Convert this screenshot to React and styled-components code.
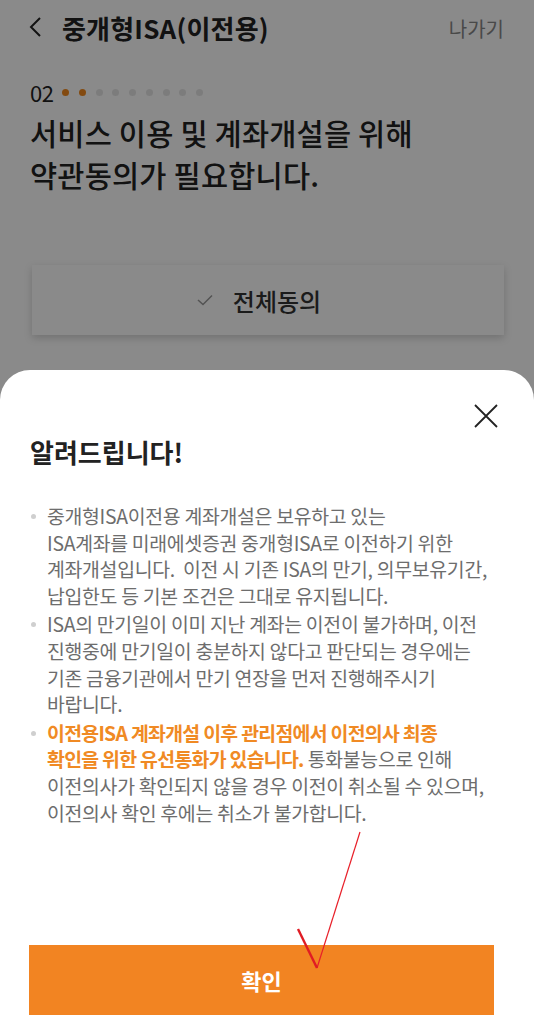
import React from "react";
import styled, { createGlobalStyle } from "styled-components";

const Global = createGlobalStyle`
  html, body { margin: 0; padding: 0; }
  body { font-family: "Noto Sans CJK KR", "Noto Sans", sans-serif; background: #fff; }
  * { box-sizing: border-box; }
`;

const Page = styled.div`
  position: relative;
  width: 534px;
  height: 1024px;
  overflow: hidden;
  background: #fff;
`;

const Header = styled.header`
  display: flex;
  align-items: center;
  height: 54px;
  padding: 0 30px 0 28px;
`;

const BackBtn = styled.span`
  display: flex;
  width: 22px;
  margin-right: 12px;
`;

const Title = styled.h1`
  flex: 1;
  margin: 0;
  font-size: 26px;
  font-weight: 700;
  color: #222;
  letter-spacing: 0.2px;
`;

const Exit = styled.span`
  font-size: 20px;
  color: #888;
  margin-top: 2px;
`;

const Content = styled.div`
  padding: 24px 30px 0;
`;

const Progress = styled.div`
  display: flex;
  align-items: center;
  height: 28px;
`;

const StepNo = styled.span`
  font-size: 22px;
  color: #222;
  margin-right: 9px;
  letter-spacing: -0.5px;
`;

const Dots = styled.div`
  display: flex;
  gap: 9.7px;
  align-items: center;
`;

const Dot = styled.span`
  width: 7px;
  height: 7px;
  border-radius: 50%;
  background: ${(p) => (p.$on ? "#f28a1e" : "#e6e6e6")};
`;

const Heading = styled.h2`
  margin: 5px 0 0;
  font-size: 29.5px;
  font-weight: 500;
  line-height: 42px;
  color: #222;
  letter-spacing: 0.2px;
`;

const AgreeBox = styled.div`
  margin: 70px 0 0 2px;
  height: 70px;
  padding-right: 18px;
  display: flex;
  align-items: center;
  justify-content: center;
  gap: 20px;
  background: #fff;
  box-shadow: 0 3px 8px rgba(0, 0, 0, 0.18);
  font-size: 24px;
  font-weight: 500;
  color: #333;
`;

const Dim = styled.div`
  position: absolute;
  inset: 0;
  background: rgba(0, 0, 0, 0.46);
`;

const Sheet = styled.section`
  position: absolute;
  left: 0;
  right: 0;
  top: 370px;
  bottom: 0;
  background: #fff;
  border-radius: 30px 30px 0 0;
  display: flex;
  flex-direction: column;
  padding: 34px 30px 9px 29px;
`;

const CloseRow = styled.div`
  display: flex;
  justify-content: flex-end;
  padding-right: 6px;
`;

const SheetTitle = styled.h3`
  margin: 5px 0 0 1px;
  font-size: 26px;
  font-weight: 700;
  color: #222;
  letter-spacing: 0;
`;

const List = styled.ul`
  list-style: none;
  margin: 33px 0 0;
  padding: 0;
  flex: 1;
`;

const Item = styled.li`
  position: relative;
  padding-left: 18px;
  font-size: 19.4px;
  line-height: 26.7px;
  color: #6d6d6d;
  letter-spacing: -0.3px;
  margin-bottom: 1.5px;
  white-space: nowrap;
  &::before {
    content: "";
    position: absolute;
    left: 2px;
    top: 11px;
    width: 5px;
    height: 5px;
    border-radius: 50%;
    background: #cfcfcf;
  }
`;

const Strong = styled.b`
  color: #f08a24;
  font-weight: 700;
  letter-spacing: -0.7px;
`;

const ConfirmBtn = styled.button`
  height: 70px;
  width: 465px;
  border: none;
  background: #f28422;
  color: #fff;
  font-family: inherit;
  font-size: 22px;
  font-weight: 700;
`;

const Annotation = styled.svg`
  position: absolute;
  left: 0;
  top: 0;
  pointer-events: none;
`;

export default function App() {
  return (
    <>
      <Global />
      <Page>
        <Header>
          <BackBtn>
            <svg width="14" height="22" viewBox="0 0 14 22">
              <path d="M12 2 L3 11 L12 20" fill="none" stroke="#222" strokeWidth="2" />
            </svg>
          </BackBtn>
          <Title>중개형ISA(이전용)</Title>
          <Exit>나가기</Exit>
        </Header>
        <Content>
          <Progress>
            <StepNo>02</StepNo>
            <Dots>
              {Array.from({ length: 9 }).map((_, i) => (
                <Dot key={i} $on={i < 2} />
              ))}
            </Dots>
          </Progress>
          <Heading>
            서비스 이용 및 계좌개설을 위해
            <br />
            약관동의가 필요합니다.
          </Heading>
          <AgreeBox>
            <svg width="16" height="12" viewBox="0 0 16 12">
              <path d="M1 6 L6 10.5 L15 1.5" fill="none" stroke="#999" strokeWidth="1.5" />
            </svg>
            전체동의
          </AgreeBox>
        </Content>
        <Dim />
        <Sheet>
          <CloseRow>
            <svg width="24" height="24" viewBox="0 0 24 24">
              <path d="M1 1 L23 23 M23 1 L1 23" stroke="#222" strokeWidth="1.8" fill="none" />
            </svg>
          </CloseRow>
          <SheetTitle>알려드립니다!</SheetTitle>
          <List>
            <Item>
              중개형ISA이전용 계좌개설은 보유하고 있는
              <br />
              ISA계좌를 미래에셋증권 중개형ISA로 이전하기 위한
              <br />
              계좌개설입니다.&nbsp; 이전 시 기존 ISA의 만기, 의무보유기간,
              <br />
              납입한도 등 기본 조건은 그대로 유지됩니다.
            </Item>
            <Item>
              ISA의 만기일이 이미 지난 계좌는 이전이 불가하며, 이전
              <br />
              진행중에 만기일이 충분하지 않다고 판단되는 경우에는
              <br />
              기존 금융기관에서 만기 연장을 먼저 진행해주시기
              <br />
              바랍니다.
            </Item>
            <Item>
              <Strong>
                이전용ISA 계좌개설 이후 관리점에서 이전의사 최종
                <br />
                확인을 위한 유선통화가 있습니다.
              </Strong>{" "}
              통화불능으로 인해
              <br />
              이전의사가 확인되지 않을 경우 이전이 취소될 수 있으며,
              <br />
              이전의사 확인 후에는 취소가 불가합니다.
            </Item>
          </List>
          <ConfirmBtn>확인</ConfirmBtn>
        </Sheet>
        <Annotation width="534" height="1024" viewBox="0 0 534 1024">
          <path d="M360 832 L317 968" stroke="#e8202a" strokeWidth="1.2" fill="none" />
          <path d="M298 929 L317 968" stroke="#e01c24" strokeWidth="2.4" fill="none" />
        </Annotation>
      </Page>
    </>
  );
}
